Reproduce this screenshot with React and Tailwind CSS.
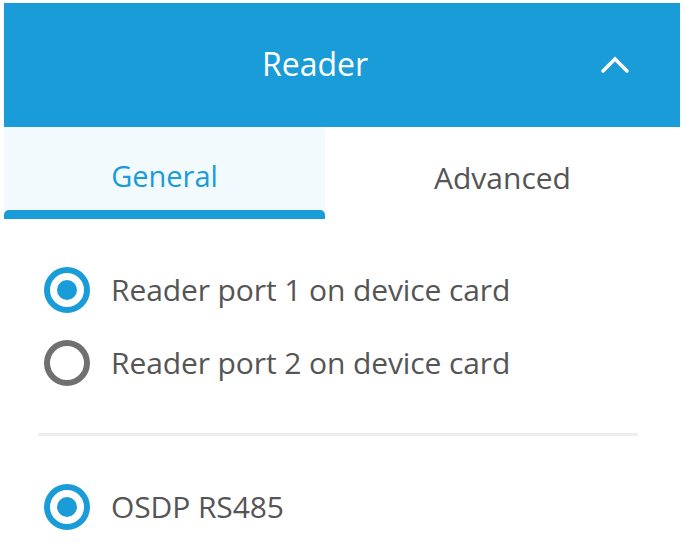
import React from 'react';

function Radio({ checked }) {
  return (
    <span
      className={
        'flex h-[46px] w-[46px] shrink-0 items-center justify-center rounded-full border-[6px] ' +
        (checked ? 'border-[#1a9cd8]' : 'border-[#707070]')
      }
    >
      {checked && <span className="h-[20px] w-[20px] rounded-full bg-[#1a9cd8]" />}
    </span>
  );
}

function Option({ checked, label }) {
  return (
    <label className="flex h-[73px] items-center gap-[21px] pl-[40px]">
      <Radio checked={checked} />
      <span className="text-[30px] tracking-[-0.1px] text-[#555555]">{label}</span>
    </label>
  );
}

export default function App() {
  return (
    <div className="h-[548px] w-[686px] overflow-hidden bg-white pl-[4px] pr-[6px] pt-[3px] font-['Open_Sans',sans-serif]">
      <div className="flex h-[124px] items-center bg-[#1a9cd8] pb-[3px] text-white">
        <div className="flex-1 pl-[52px] text-center text-[32px]">Reader</div>
        <div className="flex w-[106px] justify-center pr-[24px] pt-[2px]">
          <svg width="30" height="18" viewBox="0 0 30 18" fill="none" stroke="white" strokeWidth="3.5" strokeLinecap="round">
            <path d="M3 15 L15 3 L27 15" />
          </svg>
        </div>
      </div>

      <div className="grid grid-cols-[321px_1fr]">
        <div className="flex h-[92px] flex-col bg-[#f2fafd]">
          <div className="flex flex-1 items-center justify-center pt-[14px] text-[29px] text-[#1a9cd8]">General</div>
          <div className="h-[9px] rounded-t-[5px] bg-[#1a9cd8]" />
        </div>
        <div className="flex h-[92px] items-center justify-center pt-[8px] text-[30px] text-[#555555]">Advanced</div>
      </div>

      <div className="pt-[34px]">
        <Option checked label="Reader port 1 on device card" />
        <Option label="Reader port 2 on device card" />
      </div>

      <div className="ml-[34px] mr-[42px] mt-[34px] h-[3px] bg-[#eeeeee]" />

      <div className="pt-[34px]">
        <Option checked label="OSDP RS485" />
      </div>
    </div>
  );
}
